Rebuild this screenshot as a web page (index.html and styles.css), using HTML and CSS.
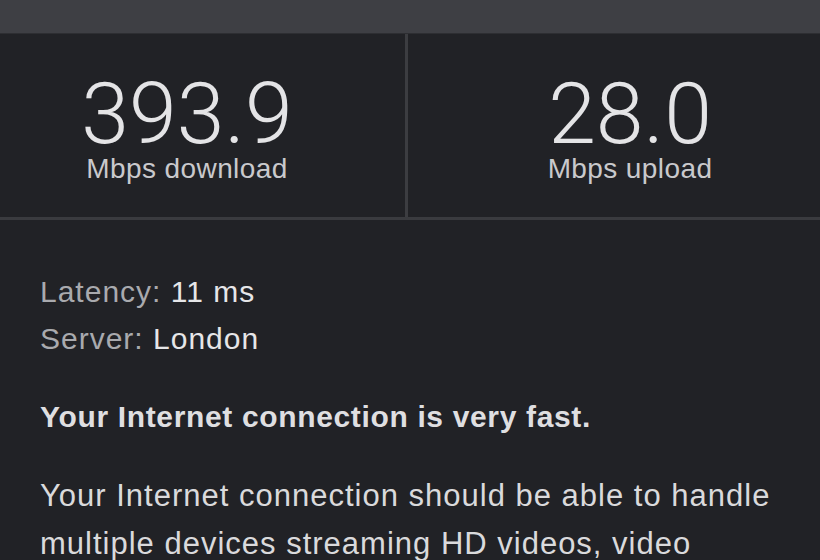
FILE: index.html
```
<!DOCTYPE html>
<html>
<head>
<meta charset="utf-8">
<link rel="stylesheet" href="styles.css">
</head>
<body>
<div class="topbar"></div>
<div class="stats">
  <div class="stat stat-left">
    <div class="num">393.9</div>
    <div class="unit">Mbps download</div>
  </div>
  <div class="stat stat-right">
    <div class="num">28.0</div>
    <div class="unit">Mbps upload</div>
  </div>
</div>
<div class="details">
  <div class="meta">
    <div class="row"><span class="label">Latency:</span> <span class="value">11 ms</span></div>
    <div class="row"><span class="label">Server:</span> <span class="value">London</span></div>
  </div>
  <p class="verdict">Your Internet connection is very fast.</p>
  <p class="desc">Your Internet connection should be able to handle multiple devices streaming HD videos, video conferencing and gaming at the same time.</p>
</div>
</body>
</html>
```
FILE: styles.css
```
html, body {
  margin: 0;
  padding: 0;
  background: #212226;
  overflow: hidden;
}
body {
  width: 820px;
  height: 560px;
  font-family: "Liberation Sans", Arial, sans-serif;
  color: #dcdcde;
}
.topbar {
  height: 33px;
  background: #3e3f44;
  border-bottom: 1px solid #2d2e32;
}
.stats {
  display: grid;
  grid-template-columns: 408px 1fr;
  border-bottom: 3px solid #3a3b3f;
  height: 183px;
}
.stat {
  display: flex;
  flex-direction: column;
  align-items: center;
  padding-top: 41px;
}
.stat-left {
  border-right: 3px solid #3c3d41;
  padding-right: 31px;
}
.stat-right {
  padding-left: 32px;
}
.num {
  font-family: Roboto, "Liberation Sans", sans-serif;
  font-weight: 300;
  font-size: 86px;
  line-height: 78px;
  color: #e4e4e6;
}
.unit {
  font-size: 28px;
  line-height: 32px;
  letter-spacing: 0.4px;
  color: #c9c9cc;
}
.details {
  padding: 48px 40px 0;
}
.row {
  font-size: 30px;
  line-height: 47px;
  letter-spacing: 1px;
}
.label {
  color: #a9aaae;
}
.value {
  color: #e6e6e8;
}
.verdict {
  margin: 35px 0 0;
  font-weight: bold;
  font-size: 30px;
  line-height: 40px;
  letter-spacing: 0.65px;
  color: #dfdfe1;
}
.desc {
  margin: 35px 0 0;
  font-size: 31px;
  line-height: 48px;
  letter-spacing: 1px;
  color: #dadadc;
}
```
